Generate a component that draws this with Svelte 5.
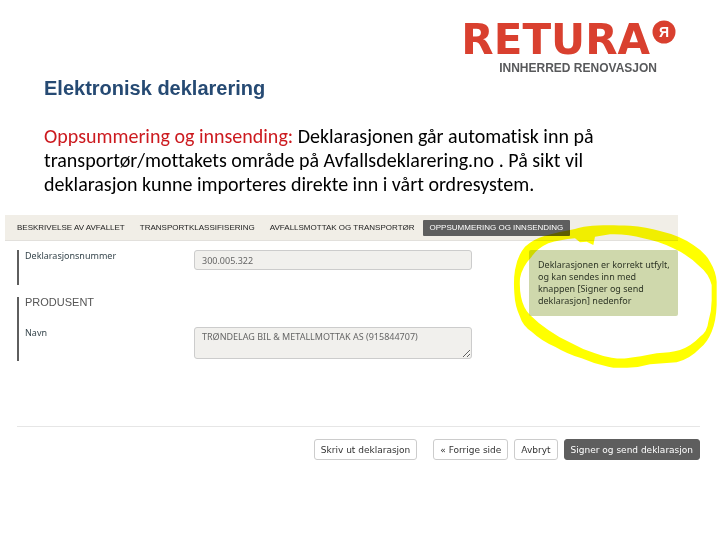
<script lang="ts">
    const steps = [
        'BESKRIVELSE AV AVFALLET',
        'TRANSPORTKLASSIFISERING',
        'AVFALLSMOTTAK OG TRANSPORTØR',
        'OPPSUMMERING OG INNSENDING',
    ]

    let active = $state(3)
    let number = $state('300.005.322')
    let name = $state('TRØNDELAG BIL & METALLMOTTAK AS (915844707)')

    function select(event: MouseEvent, index: number) {
        event.preventDefault()
        active = index
    }
</script>

<header>
    <div class="logo">
        <div class="wordmark">
            <span>RETURA</span>
            <svg viewBox="0 0 24 24" aria-hidden="true">
                <circle cx="12" cy="12" r="11.5" />
                <text x="12" y="17" text-anchor="middle">Я</text>
            </svg>
        </div>
        <div class="region">INNHERRED RENOVASJON</div>
    </div>
</header>

<main>
    <section class="intro">
        <h1>Elektronisk deklarering</h1>
        <p>
            <span class="lead">Oppsummering og innsending:</span> Deklarasjonen går automatisk inn på
            transportør/mottakets område på Avfallsdeklarering.no . På sikt vil
            deklarasjon kunne importeres direkte inn i vårt ordresystem.
        </p>
    </section>

    <nav>
        {#each steps as step, i}
            <a href="#steg-{i + 1}" class:active={i === active} onclick={(e) => select(e, i)}>{step}</a>
        {/each}
    </nav>

    <form onsubmit={(e) => e.preventDefault()}>
        <div class="columns">
            <div class="fields">
                <div class="group number">
                    <label for="number">Deklarasjonsnummer</label>
                    <input id="number" type="text" readonly bind:value={number} />
                </div>
                <div class="group producer">
                    <h2>PRODUSENT</h2>
                    <label for="name">Navn</label>
                    <textarea id="name" readonly bind:value={name}></textarea>
                </div>
            </div>

            <aside>
                <p>Deklarasjonen er korrekt utfylt, og kan sendes inn med knappen [Signer og send deklarasjon] nedenfor</p>
                <svg class="marker" viewBox="0 0 900 495" aria-hidden="true">
                    <path
                        fill-rule="evenodd"
                        d="M465 72 C490 62 540 58 630 62 Q680 66 720 78 Q780 92 820 120 Q855 142 870 170
                        Q888 200 890 230 L890 300 Q888 350 875 380 Q862 412 840 430 Q810 462 770 472
                        L690 478 Q650 490 610 488 Q585 490 565 485 Q525 478 485 460 Q440 446 405 425
                        Q365 408 335 380 Q308 362 300 335 Q285 305 283 265 Q280 225 285 195
                        Q292 152 315 125 Q340 102 375 92 Q420 80 465 72 Z
                        M465 100 Q420 104 385 115 Q352 130 335 155 Q306 185 300 220 Q298 250 303 275
                        Q310 310 330 330 Q355 355 385 375 Q420 400 455 415 Q490 435 525 445
                        Q550 455 575 458 Q600 462 620 460 Q660 455 710 445 Q750 443 780 435
                        Q815 422 840 395 Q862 380 865 350 Q876 315 875 280 L875 240
                        Q866 205 840 185 Q805 150 760 130 Q715 108 670 100 Q620 86 570 88
                        L525 95 L520 120 L500 110 L480 112 Z"
                    />
                </svg>
            </aside>
        </div>

        <footer>
            <button type="button" class="print">Skriv ut deklarasjon</button>
            <button type="button">« Forrige side</button>
            <button type="button">Avbryt</button>
            <button type="submit" class="primary">Signer og send deklarasjon</button>
        </footer>
    </form>
</main>

<style>
    :global(body) {
        background: #fff;
        color: #000;
        font-family: "Liberation Sans", Arial, sans-serif;
    }

    header {
        display: flex;
        justify-content: flex-end;
        padding: 20px 44px 0 0;
    }

    .wordmark {
        display: flex;
        align-items: flex-start;
        gap: 2px;
        color: #d9402f;
        font: bold 42px/40px "DejaVu Sans", Verdana, sans-serif;
    }

    .wordmark svg {
        width: 24px;
        height: 24px;
        fill: #d9402f;
    }

    .wordmark text {
        fill: #fff;
        font: bold 14px "Liberation Sans", Arial, sans-serif;
    }

    .region {
        padding-right: 19px;
        color: #58595b;
        font-size: 12px;
        font-weight: bold;
        line-height: 16px;
        text-align: right;
    }

    .intro {
        padding: 0 44px;
    }

    h1 {
        margin: 0 0 24px;
        color: #264a73;
        font-size: 20px;
        line-height: 24px;
    }

    .intro p {
        max-width: 570px;
        margin: 0;
        font: 20px/24px Carlito, Lato, sans-serif;
        font-variant-ligatures: none;
    }

    .lead {
        color: #cc1a1f;
    }

    nav {
        display: flex;
        align-items: center;
        gap: 1px;
        height: 25px;
        margin: 19px 42px 0 5px;
        padding-left: 5px;
        border-bottom: 1px solid #e2e0dc;
        background: #f1eee7;
    }

    nav a {
        padding: 0 7px;
        border-radius: 1px;
        color: #222;
        font-size: 8px;
        line-height: 16px;
        text-decoration: none;
        white-space: nowrap;
    }

    nav a.active {
        background: #5e5e5e;
        color: #fff;
    }

    form {
        font-family: "Noto Sans", "Open Sans", sans-serif;
        font-size: 9px;
    }

    .columns {
        display: grid;
        grid-template-columns: minmax(0, 1fr) 149px;
        gap: 57px;
        align-items: start;
        padding: 9px 42px 0 17px;
    }

    .group {
        display: grid;
        grid-template-columns: 169px minmax(0, 1fr);
        align-items: start;
        box-sizing: border-box;
        padding-left: 6px;
        border-left: 2px solid #5e5e5e;
        color: #36454c;
    }

    .number {
        min-height: 35px;
        margin-bottom: 12px;
    }

    .producer {
        min-height: 64px;
    }

    h2 {
        grid-column: 1 / -1;
        margin: 0 0 18px;
        color: #555;
        font: 11px/10px "Liberation Sans", Arial, sans-serif;
    }

    label {
        line-height: 12px;
    }

    input,
    textarea {
        box-sizing: border-box;
        width: 100%;
        height: 20px;
        margin: 0;
        padding: 0 7px;
        border: 1px solid #ccc;
        border-radius: 3px;
        background: #f1f0ed;
        color: #666;
        font: inherit;
    }

    textarea {
        height: 32px;
        padding-top: 2px;
        resize: vertical;
    }

    aside {
        position: relative;
    }

    aside p {
        margin: 0;
        padding: 9px 4px 9px 9px;
        border-radius: 2px;
        background: #cfd8ac;
        color: #2e3526;
        line-height: 12px;
    }

    .marker {
        position: absolute;
        top: -45px;
        left: -109px;
        width: 300px;
        height: 165px;
        fill: #ff0;
        mix-blend-mode: multiply;
        pointer-events: none;
    }

    footer {
        display: flex;
        justify-content: flex-end;
        gap: 6px;
        margin: 65px 20px 0 17px;
        padding-top: 12px;
        border-top: 1px solid #e6e6e6;
    }

    button {
        height: 21px;
        padding: 0 6px;
        border: 1px solid #ccc;
        border-radius: 3px;
        background: #fff;
        color: #333;
        font: 9px "DejaVu Sans", Verdana, sans-serif;
        white-space: nowrap;
    }

    .print {
        margin-right: 10px;
    }

    .primary {
        border-color: #5e5e5e;
        background: #5e5e5e;
        color: #fff;
    }
</style>
